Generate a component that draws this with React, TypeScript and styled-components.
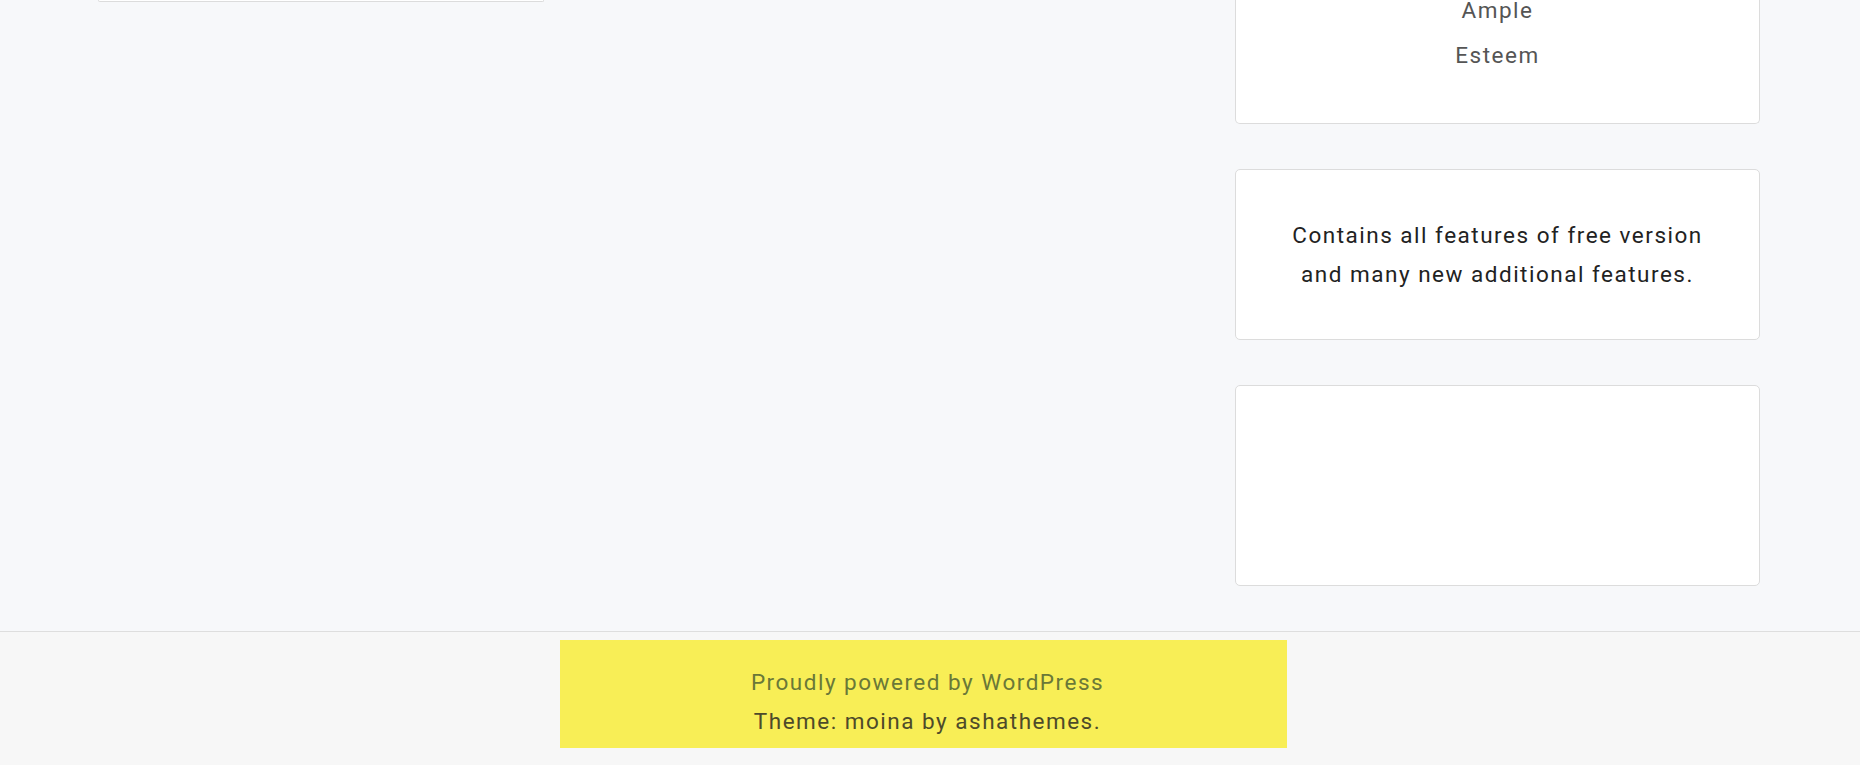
import React from 'react';
import styled, { createGlobalStyle } from 'styled-components';

const GlobalStyle = createGlobalStyle`
  html, body {
    margin: 0;
    padding: 0;
    background-color: #f7f8fa;
    font-family: Roboto, "Liberation Sans", sans-serif;
  }
  * {
    box-sizing: border-box;
  }
`;

const Page = styled.div`
  min-height: 765px;
  display: flex;
  flex-direction: column;
  overflow: hidden;
`;

const Content = styled.div`
  display: grid;
  grid-template-columns: 1fr 525px;
  padding: 0 100px 45px 98px;
  align-items: start;
`;

const Main = styled.main`
  display: grid;
  grid-template-columns: 446px;
`;

// bottom edge of a post card that has scrolled past the top
const CardTail = styled.div`
  height: 2px;
  background: #fff;
  border: 1px solid #dcdcdc;
  border-top: none;
  border-radius: 0 0 5px 5px;
`;

const Sidebar = styled.aside`
  display: flex;
  flex-direction: column;
  gap: 45px;
`;

const Widget = styled.section<{ $cut?: boolean; $height?: number }>`
  background: #fff;
  border: 1px solid #dcdcdc;
  border-radius: ${p => (p.$cut ? '0 0 5px 5px' : '5px')};
  ${p => p.$cut && 'border-top: none; margin-top: -12px;'}
  ${p => p.$height && `height: ${p.$height}px;`}
  text-align: center;
  font-size: 22.5px;
  letter-spacing: 1.5px;
`;

const LinkList = styled.ul`
  list-style: none;
  margin: 0;
  padding: 0 0 45px;
`;

const LinkItem = styled.li`
  line-height: 45px;
  color: #555;
`;

const TextBody = styled.p`
  margin: 0;
  padding: 46px 40px 45px;
  line-height: 39px;
  color: #222;
`;

const Footer = styled.footer`
  flex: 1;
  background-color: #f7f7f7;
  border-top: 1px solid #dedede;
  display: flex;
  justify-content: center;
  padding: 8px 13px 17px 0;
`;

const SiteInfo = styled.div`
  width: 727px;
  background-color: #f8ee56;
  padding: 23px 0 7px 8px;
  text-align: center;
  font-size: 22.5px;
  line-height: 39px;
  letter-spacing: 1.5px;
`;

const InfoLine = styled.div<{ $muted?: boolean }>`
  color: ${p => (p.$muted ? '#6a7838' : '#4d4a2a')};
`;

function App() {
  return (
    <Page>
      <GlobalStyle />
      <Content>
        <Main>
          <CardTail />
        </Main>
        <Sidebar>
          <Widget $cut>
            <LinkList>
              <LinkItem>Ample</LinkItem>
              <LinkItem>Esteem</LinkItem>
            </LinkList>
          </Widget>
          <Widget>
            <TextBody>
              Contains all features of free version
              <br />
              and many new additional features.
            </TextBody>
          </Widget>
          <Widget $height={201} />
        </Sidebar>
      </Content>
      <Footer>
        <SiteInfo>
          <InfoLine $muted>Proudly powered by WordPress</InfoLine>
          <InfoLine>Theme: moina by ashathemes.</InfoLine>
        </SiteInfo>
      </Footer>
    </Page>
  );
}

export default App;
